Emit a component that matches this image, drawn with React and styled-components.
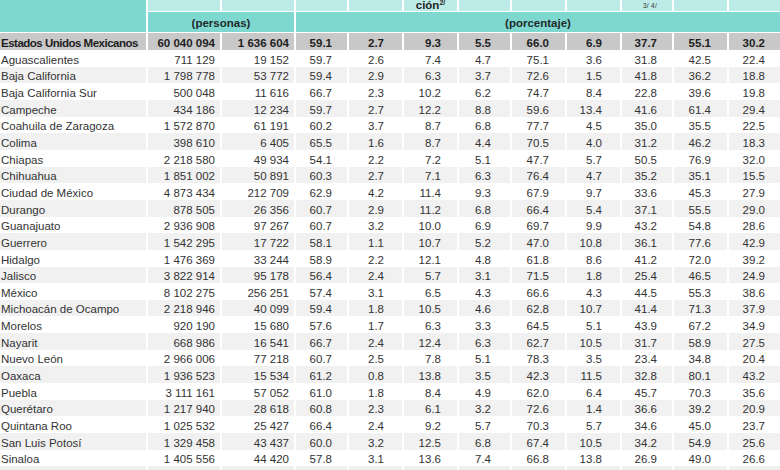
import React from "react";
import styled, { createGlobalStyle, css } from "styled-components";

const GlobalStyle = createGlobalStyle`
  html, body {
    margin: 0;
    padding: 0;
    background: #ffffff;
    overflow: hidden;
  }
  body {
    font-family: "Liberation Sans", Arial, sans-serif;
    color: #333333;
  }
`;

const COLS =
  "146px 72px 72px 51px 53px 53px 51px 53px 53px 50px 53px 1fr";
const PCT_PAD = [15, 18, 16, 19, 16, 18, 15, 16, 15];

const TURQ = "#7ed8d0";
const LIGHT = "#bdebe7";

const Table = styled.div`
  width: 780px;
  display: flex;
  flex-direction: column;
  background: #ffffff;
`;

const Header = styled.div`
  display: grid;
  grid-template-columns: ${COLS};
  grid-template-rows: 11px 20.33px;
  column-gap: 2px;
  row-gap: 1px;
  margin-bottom: 1px;
`;

const Corner = styled.div`
  grid-row: 1 / span 2;
  grid-column: 1;
  background: ${TURQ};
`;

const TopCell = styled.div`
  background: ${LIGHT};
  overflow: hidden;
  display: flex;
  justify-content: center;
  align-items: ${(p) => (p.$top ? "flex-start" : "flex-end")};
  font-weight: bold;
  font-size: 11.5px;
  line-height: 11px;
  color: #222;
`;

const Sup = styled.span`
  font-size: 7px;
  line-height: 7px;
  vertical-align: 4px;
  font-weight: bold;
`;

const TinySup = styled.span`
  font-size: 6.5px;
  line-height: 7px;
  margin-top: 2px;
  margin-left: 6px;
  font-weight: normal;
  color: #333;
  letter-spacing: 0.3px;
`;

const UnitCell = styled.div`
  grid-row: 2;
  grid-column: ${(p) => p.$span};
  background: ${TURQ};
  display: flex;
  align-items: center;
  justify-content: center;
  font-weight: bold;
  font-size: 11.5px;
  color: #1f2b2b;
  padding-top: 1px;
`;

const Row = styled.div`
  display: grid;
  grid-template-columns: ${COLS};
  column-gap: 2px;
  height: calc(50px / 3);
  flex: none;
`;

const Cell = styled.div`
  display: flex;
  align-items: flex-end;
  overflow: hidden;
  white-space: nowrap;
  font-size: 11.5px;
  line-height: 13px;
  color: #333333;
  ${(p) =>
    p.$bg &&
    css`
      background: ${p.$bg};
    `}
  ${(p) =>
    p.$bold &&
    css`
      font-weight: bold;
      color: #1e1e1e;
    `}
`;

const NameCell = styled(Cell)`
  padding-left: 1px;
  ${(p) =>
    p.$bold &&
    css`
      letter-spacing: -0.5px;
    `}
`;

const PopCell = styled(Cell)`
  justify-content: flex-end;
  padding-right: 5px;
`;

const PctCell = styled(Cell)`
  justify-content: flex-end;
  padding-right: ${(p) => p.$pad}px;
`;

const total = [
  "Estados Unidos Mexicanos",
  "60 040 094",
  "1 636 604",
  "59.1", "2.7", "9.3", "5.5", "66.0", "6.9", "37.7", "55.1", "30.2",
];

const rows = [
  ["Aguascalientes", "711 129", "19 152", "59.7", "2.6", "7.4", "4.7", "75.1", "3.6", "31.8", "42.5", "22.4"],
  ["Baja California", "1 798 778", "53 772", "59.4", "2.9", "6.3", "3.7", "72.6", "1.5", "41.8", "36.2", "18.8"],
  ["Baja California Sur", "500 048", "11 616", "66.7", "2.3", "10.2", "6.2", "74.7", "8.4", "22.8", "39.6", "19.8"],
  ["Campeche", "434 186", "12 234", "59.7", "2.7", "12.2", "8.8", "59.6", "13.4", "41.6", "61.4", "29.4"],
  ["Coahuila de Zaragoza", "1 572 870", "61 191", "60.2", "3.7", "8.7", "6.8", "77.7", "4.5", "35.0", "35.5", "22.5"],
  ["Colima", "398 610", "6 405", "65.5", "1.6", "8.7", "4.4", "70.5", "4.0", "31.2", "46.2", "18.3"],
  ["Chiapas", "2 218 580", "49 934", "54.1", "2.2", "7.2", "5.1", "47.7", "5.7", "50.5", "76.9", "32.0"],
  ["Chihuahua", "1 851 002", "50 891", "60.3", "2.7", "7.1", "6.3", "76.4", "4.7", "35.2", "35.1", "15.5"],
  ["Ciudad de México", "4 873 434", "212 709", "62.9", "4.2", "11.4", "9.3", "67.9", "9.7", "33.6", "45.3", "27.9"],
  ["Durango", "878 505", "26 356", "60.7", "2.9", "11.2", "6.8", "66.4", "5.4", "37.1", "55.5", "29.0"],
  ["Guanajuato", "2 936 908", "97 267", "60.7", "3.2", "10.0", "6.9", "69.7", "9.9", "43.2", "54.8", "28.6"],
  ["Guerrero", "1 542 295", "17 722", "58.1", "1.1", "10.7", "5.2", "47.0", "10.8", "36.1", "77.6", "42.9"],
  ["Hidalgo", "1 476 369", "33 244", "58.9", "2.2", "12.1", "4.8", "61.8", "8.6", "41.2", "72.0", "39.2"],
  ["Jalisco", "3 822 914", "95 178", "56.4", "2.4", "5.7", "3.1", "71.5", "1.8", "25.4", "46.5", "24.9"],
  ["México", "8 102 275", "256 251", "57.4", "3.1", "6.5", "4.3", "66.6", "4.3", "44.5", "55.3", "38.6"],
  ["Michoacán de Ocampo", "2 218 946", "40 099", "59.4", "1.8", "10.5", "4.6", "62.8", "10.7", "41.4", "71.3", "37.9"],
  ["Morelos", "920 190", "15 680", "57.6", "1.7", "6.3", "3.3", "64.5", "5.1", "43.9", "67.2", "34.9"],
  ["Nayarit", "668 986", "16 541", "66.7", "2.4", "12.4", "6.3", "62.7", "10.5", "31.7", "58.9", "27.5"],
  ["Nuevo León", "2 966 006", "77 218", "60.7", "2.5", "7.8", "5.1", "78.3", "3.5", "23.4", "34.8", "20.4"],
  ["Oaxaca", "1 936 523", "15 534", "61.2", "0.8", "13.8", "3.5", "42.3", "11.5", "32.8", "80.1", "43.2"],
  ["Puebla", "3 111 161", "57 052", "61.0", "1.8", "8.4", "4.9", "62.0", "6.4", "45.7", "70.3", "35.6"],
  ["Querétaro", "1 217 940", "28 618", "60.8", "2.3", "6.1", "3.2", "72.6", "1.4", "36.6", "39.2", "20.9"],
  ["Quintana Roo", "1 025 532", "25 427", "66.4", "2.4", "9.2", "5.7", "70.3", "5.7", "34.6", "45.0", "23.7"],
  ["San Luis Potosí", "1 329 458", "43 437", "60.0", "3.2", "12.5", "6.8", "67.4", "10.5", "34.2", "54.9", "25.6"],
  ["Sinaloa", "1 405 556", "44 420", "57.8", "3.1", "13.6", "7.4", "66.8", "13.8", "26.9", "49.0", "26.6"],
  ["", "", "", "", "", "", "", "", "", "", "", ""],
];

function DataRow({ values, bg, bold }) {
  const [name, p1, p2, ...pcts] = values;
  return (
    <Row>
      <NameCell $bg={bg} $bold={bold}>{name}</NameCell>
      <PopCell $bg={bg} $bold={bold}>{p1}</PopCell>
      <PopCell $bg={bg} $bold={bold}>{p2}</PopCell>
      {pcts.map((v, i) => (
        <PctCell key={i} $bg={bg} $bold={bold} $pad={PCT_PAD[i]}>
          {v}
        </PctCell>
      ))}
    </Row>
  );
}

export default function App() {
  const topCells = Array.from({ length: 11 }, (_, i) => i);
  return (
    <>
      <GlobalStyle />
      <Table>
        <Header>
          <Corner />
          {topCells.map((i) => {
            if (i === 4)
              return (
                <TopCell key={i}>
                  <span>
                    ción<Sup>2/</Sup>
                  </span>
                </TopCell>
              );
            if (i === 8)
              return (
                <TopCell key={i} $top>
                  <TinySup>3/ 4/</TinySup>
                </TopCell>
              );
            return <TopCell key={i} />;
          })}
          <UnitCell $span="2 / span 2">(personas)</UnitCell>
          <UnitCell $span="4 / span 9">(porcentaje)</UnitCell>
        </Header>
        <DataRow values={total} bg="#c8c8c8" bold />
        {rows.map((r, i) => (
          <DataRow
            key={i}
            values={r}
            bg={i % 2 === 1 ? "#f1f1f1" : null}
          />
        ))}
      </Table>
    </>
  );
}
